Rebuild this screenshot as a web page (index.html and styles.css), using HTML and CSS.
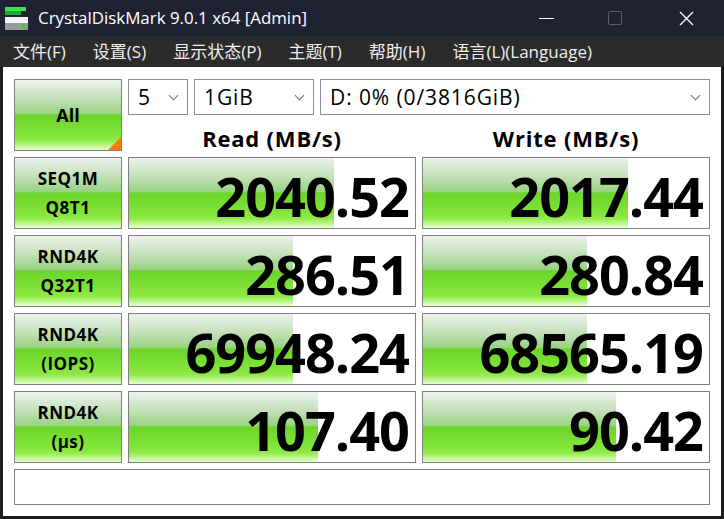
FILE: index.html
```html
<!DOCTYPE html>
<html lang="zh-CN">
<head>
    <meta charset="UTF-8">
    <meta name="viewport" content="width=device-width, initial-scale=1.0">
    <title>CrystalDiskMark 9.0.1 x64 [Admin]</title>
    <link rel="stylesheet" href="styles.css">
</head>
<body>
    <div class="window">
        <div class="titlebar">
            <svg class="app-icon" width="24" height="24" viewBox="0 0 24 24">
                <rect x="0" y="0" width="21" height="4" fill="#3ee04a"/>
                <rect x="0" y="4" width="16" height="4" fill="#22a83a"/>
                <rect x="0" y="10" width="23" height="6" fill="#f2f2f2"/>
                <rect x="0" y="16" width="23" height="7" fill="#9a9a9a"/>
                <rect x="17" y="17" width="3" height="4" fill="#3ec83e"/>
            </svg>
            <span class="title">CrystalDiskMark 9.0.1 x64 [Admin]</span>
            <div class="controls">
                <span class="ctl ctl-min"></span>
                <span class="ctl ctl-max"></span>
                <svg class="ctl ctl-close" width="15" height="15" viewBox="0 0 15 15">
                    <path d="M1 1 L14 14 M14 1 L1 14" stroke="#ffffff" stroke-width="1.3"/>
                </svg>
            </div>
        </div>

        <div class="menubar">
            <span class="menu-item">文件(F)</span>
            <span class="menu-item">设置(S)</span>
            <span class="menu-item">显示状态(P)</span>
            <span class="menu-item">主题(T)</span>
            <span class="menu-item">帮助(H)</span>
            <span class="menu-item">语言(L)(Language)</span>
        </div>

        <div class="main">
            <div class="board">
                <div class="btn-all">All</div>

                <div class="combos">
                    <div class="combo combo-count">5<span class="chevron"></span></div>
                    <div class="combo combo-size">1GiB<span class="chevron"></span></div>
                    <div class="combo combo-drive">D: 0% (0/3816GiB)<span class="chevron"></span></div>
                </div>

                <div class="col-head">Read (MB/s)</div>
                <div class="col-head">Write (MB/s)</div>

                <div class="test-label">SEQ1M<br>Q8T1</div>
                <div class="result" style="--fill: 205px">2040.52</div>
                <div class="result" style="--fill: 205px">2017.44</div>

                <div class="test-label">RND4K<br>Q32T1</div>
                <div class="result" style="--fill: 164px">286.51</div>
                <div class="result" style="--fill: 164px">280.84</div>

                <div class="test-label">RND4K<br>(IOPS)</div>
                <div class="result" style="--fill: 164px">69948.24</div>
                <div class="result" style="--fill: 164px">68565.19</div>

                <div class="test-label">RND4K<br>(µs)</div>
                <div class="result" style="--fill: 189px">107.40</div>
                <div class="result" style="--fill: 193px">90.42</div>

                <div class="comment"></div>
            </div>
        </div>
    </div>
</body>
</html>
```

FILE: styles.css
```css
body {
    margin: 0;
    background: #1c1c1c;
    font-family: "Open Sans", "Noto Sans CJK SC", sans-serif;
}

.window {
    width: 724px;
    height: 519px;
    display: flex;
    flex-direction: column;
    background: #1c1c1c;
}

/* title bar */
.titlebar {
    height: 36px;
    background: #1f2233;
    display: flex;
    align-items: center;
    color: #ffffff;
}

.app-icon {
    margin-left: 5px;
    margin-top: 2px;
}

.title {
    margin-left: 9px;
    font-size: 16.9px;
    margin-top: -1px;
}

.controls {
    margin-left: auto;
    display: flex;
    align-items: center;
    height: 36px;
}

.ctl {
    display: block;
}

.ctl-min {
    width: 15px;
    height: 1px;
    background: #ffffff;
    margin-right: 54px;
}

.ctl-max {
    width: 12px;
    height: 12px;
    border: 1px solid #5c606c;
    border-radius: 2px;
    margin-right: 57px;
}

.ctl-close {
    margin-right: 30px;
}

/* menu */
.menubar {
    height: 31px;
    background: #2b2b2b;
    display: flex;
    align-items: center;
    padding-left: 13px;
    padding-bottom: 3px;
    box-sizing: border-box;
    color: #eeeeee;
    font-size: 17px;
}

.menu-item {
    margin-right: 27px;
}

/* main panel */
.main {
    flex: 1;
    background: #ffffff;
    margin: 0 3px 3px 3px;
    padding: 12px 11px 11px 11px;
}

.board {
    display: grid;
    grid-template-columns: 108px 288px 288px;
    grid-template-rows: 36px 30px 72px 72px 72px 72px 36px;
    gap: 6px;
}

.btn-all,
.test-label,
.result {
    box-sizing: border-box;
    border: 1px solid #808080;
}

.btn-all,
.test-label {
    background: linear-gradient(#eef2ee 0%, #c6e1bb 25%, #98d381 48%, #6cd42a 50%, #7be034 70%, #8dea44 86%, #bff491 94%, #e8fdd6 100%);
    font-weight: 700;
    color: #000000;
    text-align: center;
}

.btn-all {
    grid-row: 1 / span 2;
    position: relative;
    display: flex;
    align-items: center;
    justify-content: center;
    font-size: 18px;
}

.btn-all::after {
    content: "";
    position: absolute;
    right: 0;
    bottom: 0;
    border-style: solid;
    border-width: 0 0 13px 13px;
    border-color: transparent transparent #ff7a00 transparent;
}

.combos {
    grid-column: 2 / span 2;
    display: flex;
    gap: 6px;
}

.combo {
    box-sizing: border-box;
    border: 1px solid #8c8c8c;
    display: flex;
    align-items: center;
    padding-left: 9px;
    font-size: 21px;
    letter-spacing: 0.9px;
    color: #000000;
}

.combo-count {
    width: 60px;
}

.combo-size {
    width: 120px;
}

.combo-drive {
    flex: 1;
}

.chevron {
    margin-left: auto;
    margin-right: 10px;
    width: 6px;
    height: 6px;
    border-right: 1px solid #707070;
    border-bottom: 1px solid #707070;
    transform: rotate(45deg);
    margin-top: -4px;
}

.col-head {
    text-align: center;
    font-size: 22px;
    font-weight: 700;
    letter-spacing: 0.8px;
    line-height: 30px;
    padding-top: 2px;
}

.test-label {
    font-size: 17px;
    letter-spacing: 0.5px;
    line-height: 29px;
    padding-top: 6px;
}

.result {
    background: linear-gradient(#eef2ee 0%, #c6e1bb 25%, #98d381 48%, #6cd42a 50%, #7be034 70%, #8dea44 86%, #bff491 94%, #e8fdd6 100%) no-repeat 0 0 / var(--fill) 100%, #ffffff;
    text-align: right;
    font-size: 54px;
    font-weight: 700;
    line-height: 70px;
    padding-right: 6px;
    padding-top: 3px;
    letter-spacing: -1px;
    color: #000000;
}

.comment {
    grid-column: 1 / span 3;
    border: 1px solid #808080;
}
```
